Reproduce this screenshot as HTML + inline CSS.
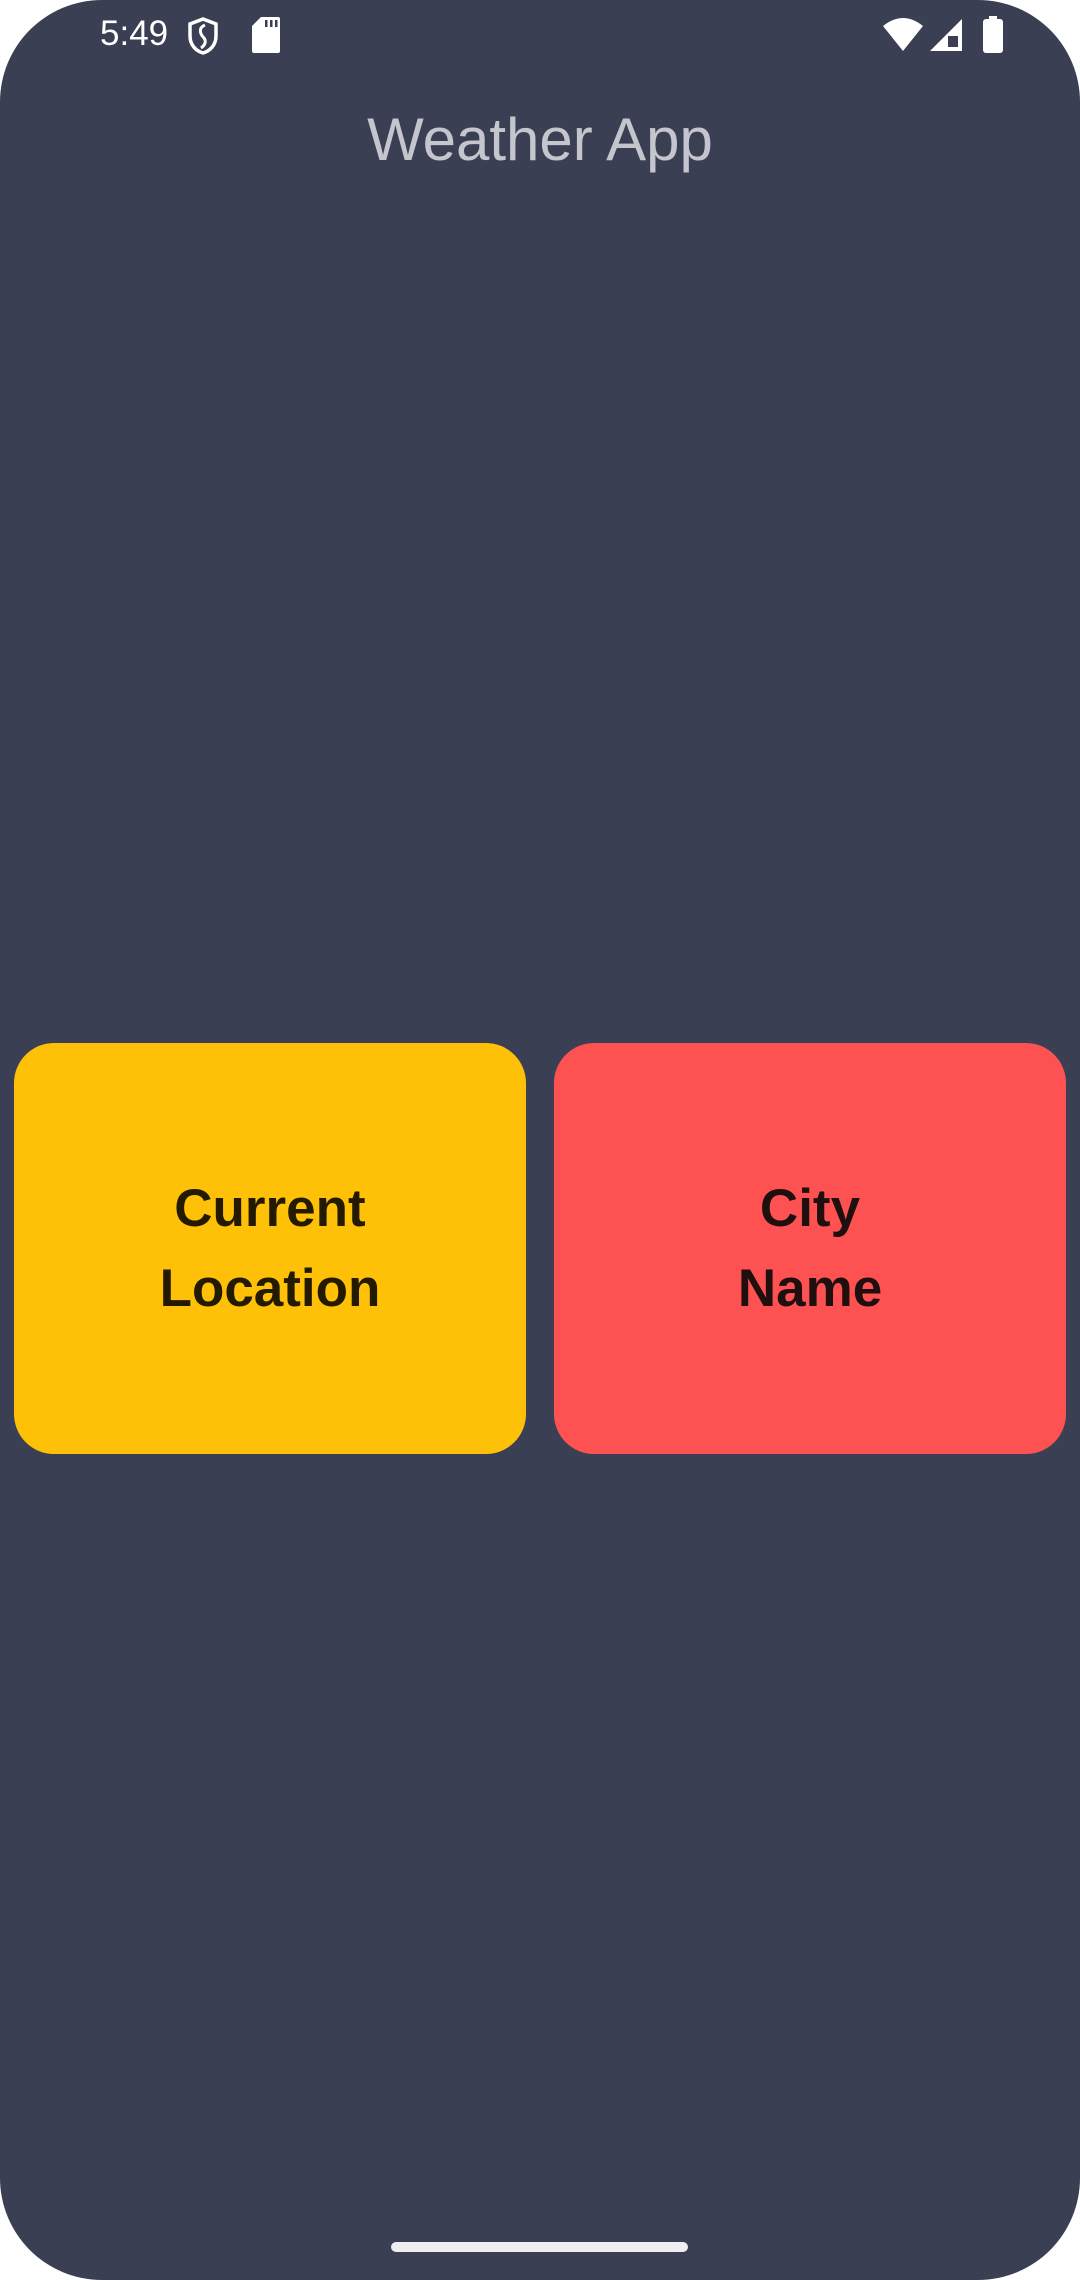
<!DOCTYPE html>
<html><head><meta charset="utf-8"><style>
html,body{margin:0;padding:0;background:#fff;}
body{width:1080px;height:2280px;position:relative;overflow:hidden;font-family:"Liberation Sans",sans-serif;}
.screen{position:absolute;left:0;top:0;width:1080px;height:2280px;background:#3b3f54;border-radius:102px;}
.title{position:absolute;left:0;width:1080px;top:100px;text-align:center;color:#c5c6cd;font-size:60px;line-height:80px;}
.card{position:absolute;top:1043px;height:411px;width:512px;border-radius:40px;display:flex;align-items:center;justify-content:center;text-align:center;font-weight:bold;font-size:53px;line-height:80px;}
.l{left:14px;background:#fec107;color:#241a00;}
.r{left:554px;background:#fe5252;color:#1f0f0f;}
.time{position:absolute;left:100px;top:12px;color:#fff;font-size:35px;line-height:44px;}
.bar{position:absolute;left:391px;top:2242px;width:297px;height:10px;border-radius:5px;background:#efeff2;}
</style></head><body>
<div class="screen"></div>
<div class="time">5:49</div>
<svg style="position:absolute;left:186px;top:16px" width="34" height="40" viewBox="0 0 34 40"><path d="M17 3 L30 8 V20 C30 29 24 35 17 37 C10 35 4 29 4 20 V8 Z" fill="none" stroke="#fff" stroke-width="3.5"/><path d="M19 9 C12 12 14 18 18 22 C21 26 18 30 15 32" fill="none" stroke="#fff" stroke-width="3"/></svg>
<svg style="position:absolute;left:252px;top:17px" width="28" height="36" viewBox="0 0 28 36"><path d="M9 0 H26 Q28 0 28 2 V34 Q28 36 26 36 H2 Q0 36 0 34 V9 Z" fill="#fff"/><rect x="13" y="3" width="2.5" height="7" fill="#3b3f54"/><rect x="18" y="3" width="2.5" height="7" fill="#3b3f54"/><rect x="23" y="3" width="2.5" height="7" fill="#3b3f54"/></svg>
<svg style="position:absolute;left:882px;top:16px" width="42" height="36" viewBox="0 0 42 36"><path d="M21 35 L1 10 Q21 -6 41 10 Z" fill="#fff"/></svg>
<svg style="position:absolute;left:928px;top:18px" width="36" height="34" viewBox="0 0 36 34"><path d="M34 1 V33 H2 Z" fill="#fff"/><path d="M20 18 V29 H30 V18" fill="#3b3f54"/></svg>
<svg style="position:absolute;left:982px;top:16px" width="22" height="37" viewBox="0 0 22 37"><rect x="7" y="0" width="8" height="4" fill="#fff"/><rect x="1" y="3" width="20" height="34" rx="3" fill="#fff"/></svg>
<div class="title">Weather App</div>
<div class="card l">Current<br>Location</div>
<div class="card r">City<br>Name</div>
<div class="bar"></div>
</body></html>
